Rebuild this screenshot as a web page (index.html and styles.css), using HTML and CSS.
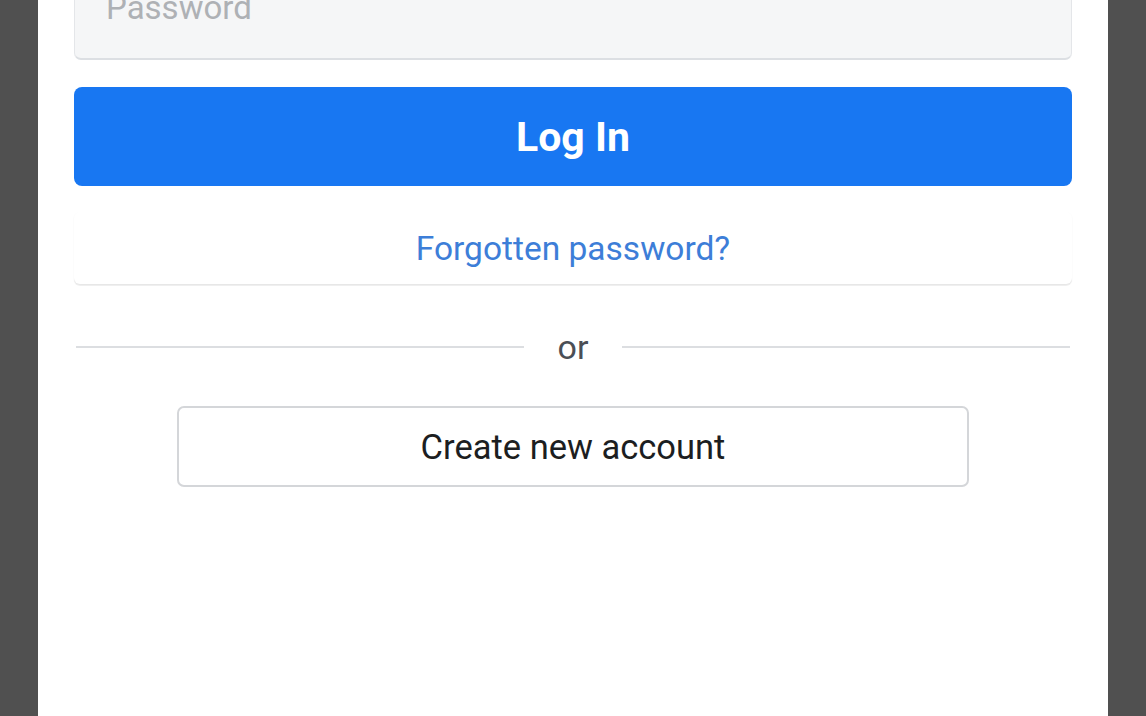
FILE: index.html
```html
<!DOCTYPE html>
<html lang="en">
<head>
<meta charset="utf-8">
<title>Log In</title>
<link rel="stylesheet" href="styles.css">
</head>
<body>
<main class="panel">
  <form class="login">
    <input class="field" type="password" placeholder="Password">
    <button class="login-btn" type="button">Log In</button>
    <div class="forgot-box"><a class="forgot" href="#">Forgotten password?</a></div>
    <div class="divider"><span class="line"></span><span class="or">or</span><span class="line"></span></div>
    <div class="create-wrap"><button class="create-btn" type="button">Create new account</button></div>
  </form>
</main>
</body>
</html>
```
FILE: styles.css
```css
html, body {
  margin: 0;
  height: 100%;
  background: #505050;
  overflow: hidden;
}
.panel {
  margin: 0 38px;
  height: 100%;
  background: #ffffff;
  padding: 0 36px;
  font-family: Roboto, "Liberation Sans", sans-serif;
}
.login {
  display: flex;
  flex-direction: column;
}
.field {
  box-sizing: border-box;
  margin-top: -40px;
  height: 100px;
  width: 100%;
  border: 1px solid #e4e6e9;
  border-bottom: 2px solid #dcdfe3;
  border-radius: 7px;
  background: #f5f6f7;
  padding: 0 31px;
  padding-bottom: 4px;
  font-family: Roboto, "Liberation Sans", sans-serif;
  font-size: 33px;
  color: #1c1e21;
  outline: none;
}
.field::placeholder {
  color: #aeb1b5;
}
.login-btn {
  margin-top: 27px;
  height: 99px;
  width: 100%;
  border: none;
  border-radius: 8px;
  background: #1877f2;
  color: #ffffff;
  font-family: Roboto, "Liberation Sans", sans-serif;
  font-weight: 700;
  font-size: 41px;
  padding: 0;
}
.forgot-box {
  margin-top: 26px;
  height: 72px;
  display: flex;
  align-items: center;
  justify-content: center;
  border-radius: 6px;
  background: #ffffff;
  box-shadow: 0 1px 2px rgba(0,0,0,0.06), 0 2px 0 rgba(0,0,0,0.05);
}
.forgot {
  color: #3d7ed8;
  text-decoration: none;
  font-size: 33.5px;
}
.divider {
  margin-top: 45px;
  display: flex;
  align-items: center;
  gap: 30px;
  padding: 0 2px;
}
.line {
  flex: 1;
  height: 2px;
  background: #dcdee1;
}
.or {
  color: #4b4f56;
  font-size: 34px;
  line-height: 36px;
  padding: 0 4px;
}
.create-wrap {
  margin-top: 41px;
  display: flex;
  justify-content: center;
}
.create-btn {
  box-sizing: border-box;
  width: 792px;
  height: 81px;
  background: #ffffff;
  border: 2px solid #d4d6d9;
  border-radius: 7px;
  color: #1c1e21;
  font-family: Roboto, "Liberation Sans", sans-serif;
  font-size: 34.5px;
  padding: 0;
}
```
